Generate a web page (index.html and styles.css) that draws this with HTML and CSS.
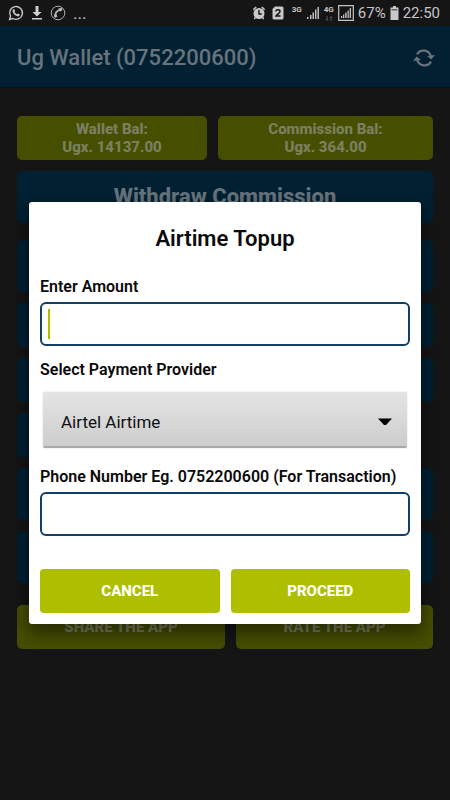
FILE: index.html
```html
<!DOCTYPE html>
<html lang="en">
<head>
<meta charset="utf-8">
<meta name="viewport" content="width=device-width, initial-scale=1">
<title>Ug Wallet</title>
<link rel="stylesheet" href="styles.css">
</head>
<body>
<div class="status">
  <div class="status-left">
    <svg width="16" height="16" viewBox="0 0 16 16" fill="none" stroke="#c4c4c4"><path d="M1.6 14.4l.9-3.3a6.4 6.4 0 1 1 2.4 2.4z" stroke-width="1.4"/><path d="M5.2 4.4l1-.4 1 2-.7 1c.6 1.100 1.300 1.700 2.400 2.200l.9-.8 2 1c0 1.300-1 2-2.100 1.900C7 11 4.500 8 4.500 5.800c0-.6.3-1 .7-1.400z" fill="#c4c4c4" stroke="none"/></svg>
    <svg width="12" height="16" viewBox="0 0 12 16" fill="#d0d0d0"><path d="M4.500 1h3v6h3L6 11.500 1.500 7h3zM1 13h10v1.500H1z"/></svg>
    <svg width="16" height="16" viewBox="0 0 16 16" fill="none" stroke="#b0b0b0"><circle cx="8" cy="8" r="6.800"/><path d="M5.200 12C4.600 8.500 7 5 10.500 4.600" stroke-width="1.800"/><path d="M8.600 3.200l3.200-.2.600 2.300-2.800 1.500zM3.800 9.700l2.600-.5 1 2.300-2.300 1.500z" fill="#b8b8b8" stroke="none"/></svg>
    <span class="dots">...</span>
  </div>
  <div class="status-right">
    <svg width="14" height="16" viewBox="0 0 14 16" fill="#c8c8c8"><circle cx="7" cy="8.500" r="5.500"/><path d="M.8 4.200L3.600 1.500 4.800 2.600 1.900 5.200zM13.200 4.200L10.400 1.500 9.200 2.600l2.900 2.600zM2.500 12l1.500 1-1.200 1.500-1-.8zM11.500 12L10 13l1.200 1.500 1-.8z"/><path d="M7 5v4h2.800" fill="none" stroke="#151515" stroke-width="1.400"/></svg>
    <svg class="sim" width="12" height="16" viewBox="0 0 12 16"><path d="M3 1.500h7a1.500 1.500 0 0 1 1.500 1.500v10a1.500 1.500 0 0 1-1.500 1.500H2A1.500 1.500 0 0 1 .5 13V4z" fill="#c8c8c8"/><path d="M3.800 6.500C4 4.300 8 4.300 8 6.500c0 1.500-3 2.700-4 4.600h4.500" fill="none" stroke="#151515" stroke-width="1.500"/></svg>
    <span class="net net-3g">3G</span>
    <svg width="14" height="14" viewBox="0 0 14 14" fill="#bdbdbd"><path d="M1 11h1.500v2H1zM4 9h1.500v4H4zM6.500 6.500H8V13H6.500zM9 3.500h1.500V13H9zM11.500 1H13v12h-1.500z"/></svg>
    <span class="net">4G<svg width="8" height="5" viewBox="0 0 8 5" fill="#555"><path d="M2 5L.5 3h1V0h1v3h1zM6 0l1.500 2h-1v3h-1V2h-1z"/></svg></span>
    <svg width="16" height="16" viewBox="0 0 16 16" fill="#c4c4c4"><path d="M.7.7h14.600v14.600H.7z" fill="none" stroke="#c4c4c4" stroke-width="1.200"/><path d="M3 11h1.200v2H3zM5 9.500h1.300V13H5zM7.200 7.500h1.400V13H7.200zM9.500 5.500h1.300V13H9.500zM11.700 3H13v10h-1.300z"/></svg>
    <span class="battery">67%</span>
    <svg width="9" height="14" viewBox="0 0 9 14"><path d="M3 0h3v1.500h2.500V14H.5V1.500H3z" fill="#c8c8c8"/><path d="M1.500 3h6v1.500h-6z" fill="#666"/></svg>
    <span class="clock">22:50</span>
  </div>
</div>
<header class="bar">
  <h1 class="bar-title">Ug Wallet (0752200600)</h1>
  <button class="refresh" type="button" aria-label="Refresh">
    <svg width="24" height="20" viewBox="0 0 24 20" fill="none" stroke="#67747c" stroke-width="2.200"><path d="M5 6.400A7.600 7.600 0 0 1 18.800 8M19 13.600A7.600 7.600 0 0 1 5.200 12"/><path d="M15 8l8-1-3.600 4.600zM9 12l-8 1 3.600-4.600z" fill="#67747c" stroke="none"/></svg>
  </button>
</header>
<main class="home">
  <div class="row balances">
    <button class="tile lime" type="button">Wallet Bal:<br>Ugx. 14137.00</button>
    <button class="tile lime" type="button">Commission Bal:<br>Ugx. 364.00</button>
  </div>
  <div class="services">
    <button class="tile blue tall" type="button">Withdraw Commission</button>
    <div class="tile blue tall spaced"></div>
    <div class="tile blue"></div>
    <div class="tile blue"></div>
    <div class="tile blue half"></div>
    <div class="tile blue tall"></div>
    <div class="tile blue tall"></div>
  </div>
  <div class="row links">
    <button class="tile lime" type="button">SHARE THE APP</button>
    <button class="tile lime" type="button">RATE THE APP</button>
  </div>
</main>
<div class="overlay">
  <form class="dialog" role="dialog" aria-labelledby="topup">
    <h2 class="dialog-title" id="topup">Airtime Topup</h2>
    <label class="label" for="amount">Enter Amount</label>
    <div class="field"><input class="input" id="amount" type="text" inputmode="numeric"><span class="caret"></span></div>
    <label class="label" for="provider">Select Payment Provider</label>
    <div class="picker">
      <select class="select" id="provider"><option>Airtel Airtime</option></select>
      <svg class="arrow" width="14" height="8" viewBox="0 0 14 8"><path d="M0 .5h14L8 7H6z"/></svg>
    </div>
    <label class="label" for="phone">Phone Number Eg. 0752200600 (For Transaction)</label>
    <div class="field"><input class="input" id="phone" type="tel"></div>
    <div class="actions">
      <button class="action" type="button">CANCEL</button>
      <button class="action" type="button">PROCEED</button>
    </div>
  </form>
</div>
</body>
</html>
```
FILE: styles.css
```css
* { box-sizing: border-box; }
body {
  margin: 0;
  min-height: 100vh;
  background: #151515;
  font-family: Roboto, "Liberation Sans", sans-serif;
}
button, input, select { font: inherit; margin: 0; border: 0; }
h1, h2 { margin: 0; }
svg { display: block; flex: none; }

.status {
  display: flex;
  justify-content: space-between;
  align-items: center;
  height: 26px;
  padding: 0 10px 0 8px;
  color: #c4c4c4;
}
.status-left { display: flex; align-items: center; gap: 7px; }
.status-right { display: flex; align-items: center; gap: 4px; }
.sim { margin-left: 2px; }
.dots { font-size: 17px; line-height: 20px; }
.net { display: flex; flex-direction: column; align-items: center; gap: 2px; font-size: 8px; line-height: 8px; font-weight: 700; }
.net-3g { padding: 0 0 7px 4px; }
.battery, .clock { font-size: 15px; line-height: 20px; }

.bar {
  display: flex;
  justify-content: space-between;
  align-items: center;
  height: 62px;
  padding: 2px 14px 0 17px;
  background: #012032;
  border-bottom: 1px solid #0b1116;
}
.bar-title { font-size: 22px; line-height: 28px; font-weight: 500; color: #67747c; }
.refresh { padding: 0; background: none; }

.home { padding: 28px 17px; }
.row { display: grid; gap: 11px; }
.balances { grid-template-columns: 190fr 215fr; margin-bottom: 11px; }
.links { grid-template-columns: 208fr 197fr; margin-top: 22px; }
.services { display: flex; flex-direction: column; gap: 11px; }
.tile {
  min-height: 44px;
  padding: 0 8px;
  border-radius: 5px;
  font-size: 15px;
  line-height: 18px;
  font-weight: 800;
  text-align: center;
}
.lime { background: #464f00; color: #7b8062; }
.blue { background: #012032; color: #67747c; }
.tall { min-height: 52px; font-size: 22px; }
.spaced { margin-top: 6px; }
.half { width: 50%; }

.overlay {
  position: absolute;
  inset: 26px 0 0;
  display: flex;
  align-items: center;
  padding: 0 29px;
}
.dialog {
  flex: 1;
  min-width: 0;
  padding: 22px 11px 11px;
  border-radius: 3px;
  background: #fff;
  box-shadow: 0 8px 18px 2px rgba(0, 0, 0, .45);
  color: #0a0a0a;
}
.dialog-title { margin-bottom: 24px; font-size: 22px; line-height: 30px; font-weight: 600; text-align: center; }
.label { display: block; font-size: 16px; line-height: 18px; font-weight: 600; white-space: nowrap; }
.field { position: relative; margin: 6px 0 15px; }
.input {
  display: block;
  width: 100%;
  height: 44px;
  padding: 0 8px;
  border: 2px solid #123f63;
  border-radius: 6px;
  background: #fff;
}
.caret { position: absolute; left: 8px; top: 7px; width: 2px; height: 30px; background: #aebf00; }
.picker { position: relative; margin: 13px 3px 20px; }
.select {
  display: block;
  width: 100%;
  height: 56px;
  padding: 6px 40px 0 18px;
  border-bottom: 2px solid #a9a9a9;
  border-radius: 2px;
  background: linear-gradient(#e4e4e4, #cdcdcd);
  box-shadow: 0 0 1px #999;
  appearance: none;
  font-size: 17px;
  color: #111;
}
.arrow { position: absolute; right: 15px; top: 26px; pointer-events: none; }
.actions { display: grid; grid-template-columns: 1fr 1fr; gap: 11px; margin-top: 33px; }
.action { height: 44px; border-radius: 4px; background: #aebf00; color: #fff; font-size: 15px; font-weight: 800; }
```
